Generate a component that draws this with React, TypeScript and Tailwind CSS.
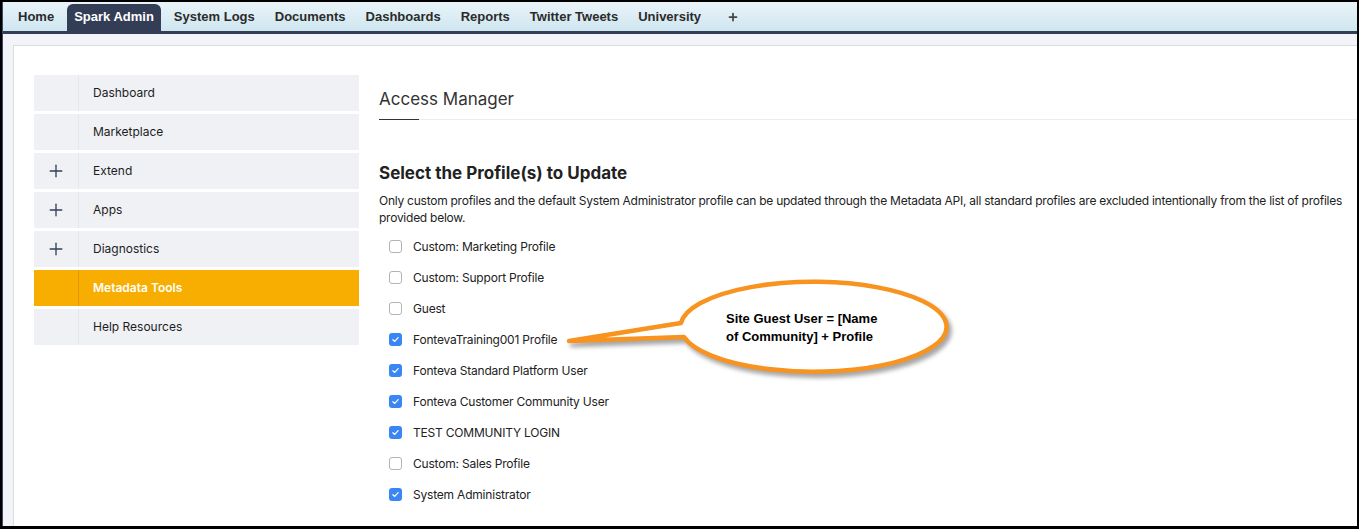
import { Plus } from "lucide-react";

const tabs = [
  "Home",
  "Spark Admin",
  "System Logs",
  "Documents",
  "Dashboards",
  "Reports",
  "Twitter Tweets",
  "University",
];

const menu = [
  { label: "Dashboard", expand: false },
  { label: "Marketplace", expand: false },
  { label: "Extend", expand: true },
  { label: "Apps", expand: true },
  { label: "Diagnostics", expand: true },
  { label: "Metadata Tools", expand: false, active: true },
  { label: "Help Resources", expand: false },
];

const profiles = [
  { name: "Custom: Marketing Profile", checked: false },
  { name: "Custom: Support Profile", checked: false },
  { name: "Guest", checked: false },
  { name: "FontevaTraining001 Profile", checked: true },
  { name: "Fonteva Standard Platform User", checked: true },
  { name: "Fonteva Customer Community User", checked: true },
  { name: "TEST COMMUNITY LOGIN", checked: true },
  { name: "Custom: Sales Profile", checked: false },
  { name: "System Administrator", checked: true },
];

const Checkbox = ({ checked }: { checked: boolean }) =>
  checked ? (
    <span className="flex h-[13px] w-[13px] items-center justify-center rounded-[3px] bg-[#3b86f5]">
      <svg viewBox="0 0 12 12" className="h-[9px] w-[9px]">
        <path d="M2.5 6.3 L5 8.6 L9.5 3.4" fill="none" stroke="#fff" strokeWidth="1.6" strokeLinecap="round" strokeLinejoin="round" />
      </svg>
    </span>
  ) : (
    <span className="h-[13px] w-[13px] rounded-[3px] border border-[#b3b3b3] bg-white" />
  );

const Callout = () => (
  <div className="absolute left-[560px] top-[276px] h-[110px] w-[400px]">
    <svg width="400" height="110" viewBox="560 276 400 110" className="absolute inset-0 drop-shadow-[3px_4px_2px_rgba(0,0,0,0.35)]">
      <path
        d="M681 323 A133 45 0 1 1 684 337 L569 341 Z"
        fill="#fff"
        stroke="#f7931e"
        strokeWidth="4.5"
        strokeLinejoin="round"
      />
    </svg>
    <div className="absolute left-[166px] top-[34px] text-[13px] font-bold leading-[18px] text-black [font-family:'Liberation_Sans',Arial,sans-serif]">
      Site Guest User = [Name
      <br />
      of Community] + Profile
    </div>
  </div>
);

export default function App() {
  return (
    <div className="relative h-[529px] w-[1359px] overflow-hidden bg-black pl-[2px] pr-[2px] pt-[2px] pb-[3px]">
      <div className="flex h-full flex-col border-l border-[#3b4a6b] bg-[#f2f4f7] [font-family:Inter,'Noto_Sans',sans-serif]">
        <div className="flex h-[29px] shrink-0 items-end gap-[6px] bg-gradient-to-b from-[#e9f4f9] to-[#cfe6f0] pl-[8px] [font-family:'Liberation_Sans',Arial,sans-serif]">
          {tabs.map((t) => (
            <div
              key={t}
              className={
                t === "Spark Admin"
                  ? "flex h-[27px] items-center rounded-t-[6px] bg-[#343d56] px-[7px] pb-[2px] text-[13px] font-bold text-white"
                  : "flex h-[27px] items-center px-[7px] pb-[2px] text-[13px] font-bold text-[#2b2b2b]"
              }
            >
              {t}
            </div>
          ))}
          <div className="flex h-[27px] items-center px-[13px] pb-[2px] text-[#444]">
            <Plus size={12} strokeWidth={3.5} />
          </div>
        </div>
        <div className="h-[3px] shrink-0 bg-[#343d56]" />
        <div className="flex-1 pl-[10px] pt-[11px]">
          <div className="flex h-full gap-[20px] border-l border-t border-[#d9dce1] bg-white pl-[20px] pt-[29px]">
            <div className="flex w-[325px] shrink-0 flex-col gap-[3px]">
              {menu.map((m) => (
                <div
                  key={m.label}
                  className={
                    m.active
                      ? "flex h-[36px] items-center bg-[#f8ae00] text-[12px] font-semibold text-white"
                      : "flex h-[36px] items-center bg-[#eff1f5] text-[12px] text-[#1d1d1d]"
                  }
                >
                  <div
                    className={
                      m.active
                        ? "flex h-full w-[45px] items-center justify-center border-r border-[#e09a00]"
                        : "flex h-full w-[45px] items-center justify-center border-r border-[#e4e7ec] text-[#34405a]"
                    }
                  >
                    {m.expand && <Plus size={20} strokeWidth={1.6} />}
                  </div>
                  <span className="pl-[14px]">{m.label}</span>
                </div>
              ))}
            </div>
            <div className="flex-1 pt-[12px] text-[#2b2b2b]">
              <div className="border-b border-[#ececec]">
                <h1 className="pb-[8px] text-[17px] leading-[24px] text-[#333]">Access Manager</h1>
                <div className="-mb-px h-px w-[40px] bg-[#333]" />
              </div>
              <h2 className="mt-[41px] text-[17px] font-bold leading-[24px] text-[#222]">
                Select the Profile(s) to Update
              </h2>
              <p className="mt-[7px] pr-[8px] text-[12px] leading-[17px] tracking-[-0.25px] text-[#222]">
                Only custom profiles and the default System Administrator profile can be updated through the Metadata API, all standard profiles are excluded intentionally from the list of profiles provided below.
              </p>
              <div className="mt-[5px] flex flex-col">
                {profiles.map((p) => (
                  <label key={p.name} className="flex h-[31px] items-center gap-[11px] pl-[10px] text-[12px] tracking-[-0.2px] text-[#222]">
                    <Checkbox checked={p.checked} />
                    {p.name}
                  </label>
                ))}
              </div>
            </div>
          </div>
        </div>
      </div>
      <Callout />
    </div>
  );
}
